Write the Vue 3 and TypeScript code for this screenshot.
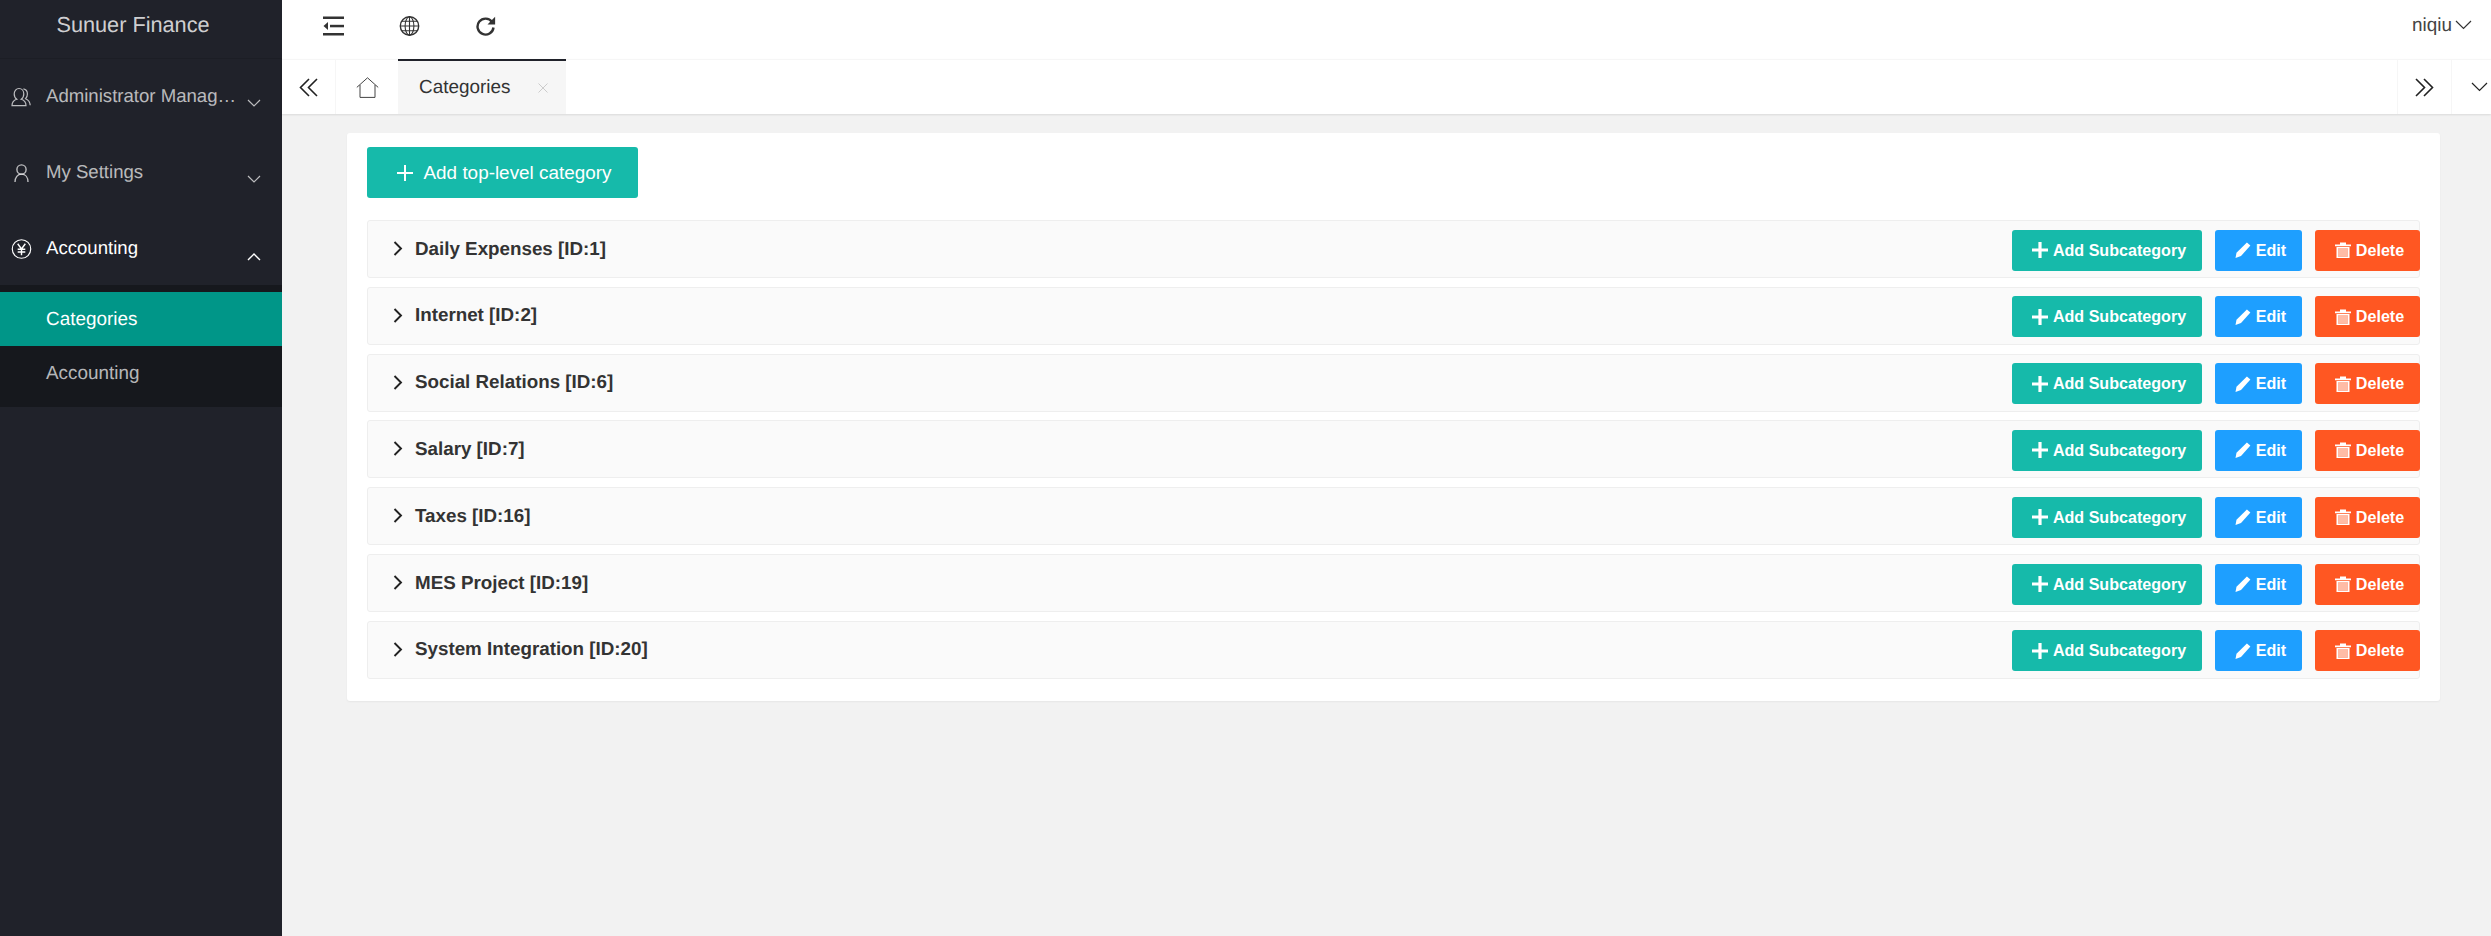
<script setup lang="ts">
type Category = { id: number; name: string };

const categories: Category[] = [
  { id: 1, name: "Daily Expenses" },
  { id: 2, name: "Internet" },
  { id: 6, name: "Social Relations" },
  { id: 7, name: "Salary" },
  { id: 16, name: "Taxes" },
  { id: 19, name: "MES Project" },
  { id: 20, name: "System Integration" },
];
</script>

<template>
  <div class="layout">
    <aside class="side">
      <div class="logo">Sunuer Finance</div>
      <nav class="menu">
        <div class="menu-item">
          <svg class="menu-icon" viewBox="0 0 21 19" fill="none" stroke="currentColor" stroke-width="1.2">
            <path d="M1 18.200c0-3.600 2.200-5.600 4.800-6.400C4 10.600 3.200 8.800 3.200 6.600 3.200 3.400 5.200 1 8 1s4.800 2.400 4.800 5.600c0 2.200-.8 4-2.600 5.200 2.600.8 4.800 2.800 4.800 6.400H1z" />
            <path d="M12.400 1.400c2.400.4 4 2.600 4 5.200 0 1.800-.6 3.400-1.800 4.600 2.400 1 4.400 3 4.600 6.600" />
          </svg>
          <span class="menu-text">Administrator Management</span>
          <svg class="menu-arrow" viewBox="0 0 14 8" fill="none" stroke="currentColor" stroke-width="1.2"><path d="M1 1l6 6 6-6" /></svg>
        </div>
        <div class="menu-item">
          <svg class="menu-icon" viewBox="0 0 21 19" fill="none" stroke="currentColor" stroke-width="1.4">
            <circle cx="10.500" cy="6" r="4.600" />
            <path d="M4 18.500c0-4.600 2.600-7.900 6.500-7.900s6.500 3.300 6.500 7.900" />
          </svg>
          <span class="menu-text">My Settings</span>
          <svg class="menu-arrow" viewBox="0 0 14 8" fill="none" stroke="currentColor" stroke-width="1.2"><path d="M1 1l6 6 6-6" /></svg>
        </div>
        <div class="menu-item open">
          <svg class="menu-icon" viewBox="0 0 21 21" fill="none" stroke="currentColor" stroke-width="1.2">
            <circle cx="10.500" cy="10.500" r="9.700" />
            <path stroke-width="1.500" d="M6.500 5l4 5.500 4-5.500M10.500 10.500V17M6.500 10.800h8M6.500 13.600h8" />
          </svg>
          <span class="menu-text">Accounting</span>
          <svg class="menu-arrow up" viewBox="0 0 14 8" fill="none" stroke="currentColor" stroke-width="1.400"><path d="M1 7l6-6 6 6" /></svg>
        </div>
        <div class="submenu">
          <div class="sub-item active">Categories</div>
          <div class="sub-item">Accounting</div>
        </div>
      </nav>
    </aside>

    <div class="body">
      <header class="toolbar">
        <div class="tool-left">
          <svg class="tool-icon" viewBox="0 0 21 19" fill="#333">
            <rect x="0" y="0" width="21" height="2.500" />
            <rect x="0" y="16.500" width="21" height="2.500" />
            <rect x="7" y="8.300" width="14" height="2.500" />
            <path d="M5 5.500v8L0.500 9.500z" />
          </svg>
          <svg class="tool-icon" viewBox="0 0 20 20" fill="none" stroke="#333" stroke-width="1.100">
            <circle cx="10" cy="10" r="9.200" stroke-width="1.400" />
            <ellipse cx="10" cy="10" rx="4.400" ry="9.200" />
            <path d="M10 .8v18.400M.8 10h18.400M2.200 5.200h15.600M2.200 14.800h15.600" />
          </svg>
          <svg class="tool-icon" viewBox="0 0 20 20" fill="none" stroke="#333" stroke-width="2.400">
            <path d="M16.600 6A8 8 0 1 0 18 11.500" />
            <path d="M19.600 .8v7.600h-7.600z" fill="#333" stroke="none" />
          </svg>
        </div>
        <div class="user">
          <span>niqiu</span>
          <svg class="user-arrow" viewBox="0 0 17 10" fill="none" stroke="#333" stroke-width="1.200"><path d="M1 1l7.500 7.500L16 1" /></svg>
        </div>
      </header>

      <div class="tabbar">
        <div class="tab-btn prev">
          <svg class="dbl" viewBox="0 0 19 19" fill="none" stroke="#222" stroke-width="1.600"><path d="M10 1L1.500 9.500 10 18M18 1L9.500 9.500 18 18" /></svg>
        </div>
        <div class="tab-home">
          <svg class="home" viewBox="0 0 23 21" fill="none" stroke="#444" stroke-width="1"><path d="M.8 10.400L11.500.8l10.700 9.600M4 8v12.400h15V8" /></svg>
        </div>
        <div class="tab">
          <span>Categories</span>
          <svg class="tab-close" viewBox="0 0 10 10" fill="none" stroke="#ccc" stroke-width="1"><path d="M.5.5l9 9M9.500.5l-9 9" /></svg>
        </div>
        <div class="tab-fill"></div>
        <div class="tab-btn next">
          <svg class="dbl" viewBox="0 0 19 19" fill="none" stroke="#222" stroke-width="1.600"><path d="M1 1l8.500 8.500L1 18M9 1l8.500 8.500L9 18" /></svg>
        </div>
        <div class="tab-btn more">
          <svg class="more-arrow" viewBox="0 0 17 10" fill="none" stroke="#222" stroke-width="1.200"><path d="M1 1l7.500 7.500L16 1" /></svg>
        </div>
      </div>

      <main class="content">
        <section class="card">
          <button class="add-top">
            <svg class="add-plus" viewBox="0 0 16 16" fill="none" stroke="#fff" stroke-width="2"><path d="M8 0v16M0 8h16" /></svg>
            Add top-level category
          </button>
          <ul class="rows">
            <li v-for="c in categories" :key="c.id" class="row">
              <svg class="chev" viewBox="0 0 10 15" fill="none" stroke="#222" stroke-width="1.900"><path d="M1.500 1l6.500 6.500L1.500 14" /></svg>
              <span class="row-name">{{ c.name }} [ID:{{ c.id }}]</span>
              <div class="row-actions">
                <button class="btn teal">
                  <svg class="btn-icon" viewBox="0 0 16 16" fill="none" stroke="#fff" stroke-width="3.200"><path d="M8 0v16M0 8h16" /></svg>
                  Add Subcategory
                </button>
                <button class="btn blue">
                  <svg class="btn-icon" viewBox="0 0 16 16" fill="#fff"><path d="M11.900.6l3.500 3L6 14 .5 16l1-5.200z" /></svg>
                  Edit
                </button>
                <button class="btn red">
                  <svg class="btn-icon" viewBox="0 0 16 16" fill="#fff">
                    <path d="M0 2.500h16v1.800H0zM5 .5h6v2H5z" />
                    <path fill-rule="evenodd" d="M1.500 5h13v11h-13zM3.200 6.200v8.500h9.600V6.200z" />
                    <path opacity=".6" d="M3.200 6.200h9.600v8.500H3.200z" />
                  </svg>
                  Delete
                </button>
              </div>
            </li>
          </ul>
        </section>
      </main>
    </div>
  </div>
</template>

<style>
html,
body {
  margin: 0;
  height: 100%;
}
</style>

<style scoped>
.layout {
  display: flex;
  height: 100vh;
  font-family: "Liberation Sans", Arial, sans-serif;
  font-size: 18.9px;
  color: #333;
  overflow: hidden;
  text-rendering: geometricPrecision;
}

.side {
  width: 282px;
  flex: none;
  background: #20222a;
}

.logo {
  height: 58px;
  line-height: 50px;
  padding-right: 16px;
  text-align: center;
  font-size: 21.7px;
  color: rgba(255, 255, 255, 0.8);
  box-shadow: 0 1px 0 rgba(0, 0, 0, 0.1);
}

.menu-item {
  height: 76px;
  display: flex;
  align-items: center;
  padding-left: 11px;
  color: rgba(255, 255, 255, 0.7);
}

.menu-item.open {
  color: #fff;
  height: 75px;
}

.menu-icon {
  width: 21px;
  height: 20px;
  flex: none;
  margin-right: 14px;
  margin-top: 2px;
}

.menu-text {
  width: 192px;
  font-size: 18.6px;
  white-space: nowrap;
  overflow: hidden;
  text-overflow: ellipsis;
}

.menu-arrow {
  width: 14px;
  height: 8px;
  flex: none;
  margin-left: 9px;
  margin-top: 14px;
}

.menu-arrow.up {
  margin-top: 18px;
}

.submenu {
  background: #16181d;
  padding: 7px 0;
}

.sub-item {
  height: 54px;
  line-height: 55px;
  padding-left: 46px;
  color: rgba(255, 255, 255, 0.7);
}

.sub-item.active {
  background: #009688;
  color: #fff;
}

.body {
  flex: 1;
  min-width: 0;
  background: #f2f2f2;
  display: flex;
  flex-direction: column;
}

.toolbar {
  height: 59px;
  flex: none;
  background: #fff;
  display: flex;
  align-items: center;
  justify-content: space-between;
  box-sizing: border-box;
  padding: 0 19px 8px 41px;
}

.tool-left {
  display: flex;
  align-items: center;
  gap: 55px;
}

.tool-icon {
  width: 21px;
  height: 20px;
  display: block;
}

.user {
  display: flex;
  align-items: center;
  gap: 3px;
  color: #444;
}

.user-arrow {
  width: 17px;
  height: 10px;
  margin-top: -2px;
}

.tabbar {
  height: 55px;
  flex: none;
  box-sizing: border-box;
  background: #fff;
  border-top: 1px solid #f6f6f6;
  display: flex;
  box-shadow: 0 1px 2px rgba(0, 0, 0, 0.1);
}

.tab-btn {
  display: flex;
  align-items: center;
  justify-content: center;
  box-sizing: border-box;
}

.prev {
  width: 54px;
  border-right: 1px solid #f6f6f6;
}

.next {
  width: 54px;
  border-left: 1px solid #f6f6f6;
}

.more {
  width: 40px;
  border-left: 1px solid #f6f6f6;
  justify-content: flex-start;
  padding-left: 19px;
}

.dbl {
  width: 19px;
  height: 19px;
}

.more-arrow {
  width: 17px;
  height: 10px;
}

.tab-home {
  width: 62px;
  display: flex;
  align-items: center;
  justify-content: center;
}

.home {
  width: 23px;
  height: 21px;
}

.tab {
  width: 168px;
  box-sizing: border-box;
  margin-top: -1px;
  border-top: 2px solid #20222a;
  background: #f6f6f6;
  display: flex;
  align-items: center;
  padding-left: 21px;
  color: #333;
}

.tab-close {
  width: 10px;
  height: 10px;
  margin-left: 28px;
}

.tab-fill {
  flex: 1;
}

.content {
  flex: 1;
  padding: 19px 51px 0 65px;
}

.card {
  background: #fff;
  border-radius: 3px;
  padding: 14px 20px 22px;
  box-shadow: 0 1px 2px rgba(0, 0, 0, 0.05);
}

.add-top {
  display: flex;
  align-items: center;
  justify-content: center;
  width: 271px;
  height: 51px;
  border: 0;
  border-radius: 3px;
  background: #16baaa;
  color: #fff;
  font: inherit;
  padding: 1px 0 0 3px;
}

.add-plus {
  width: 16px;
  height: 16px;
  margin-right: 11px;
}

.rows {
  list-style: none;
  margin: 22px 0 0;
  padding: 0;
  display: flex;
  flex-direction: column;
  gap: 8.83px;
}

.row {
  height: 58px;
  box-sizing: border-box;
  display: flex;
  align-items: center;
  background: #fafafa;
  border: 1px solid #eee;
  border-radius: 3px;
  padding-left: 25px;
}

.chev {
  width: 10px;
  height: 15px;
  flex: none;
  margin-right: 12px;
  margin-top: -1px;
}

.row-name {
  font-weight: bold;
  font-size: 18.8px;
  margin-top: -1px;
}

.row-actions {
  margin-left: auto;
  margin-right: -1px;
  display: flex;
  gap: 13px;
  margin-top: 2px;
}

.btn {
  height: 41px;
  border: 0;
  border-radius: 3px;
  color: #fff;
  font-family: inherit;
  font-size: 16.1px;
  font-weight: bold;
  display: flex;
  align-items: center;
  justify-content: center;
  padding: 0 0 0 4px;
}

.btn-icon {
  width: 16px;
  height: 16px;
  margin-right: 5px;
}

.teal {
  width: 190px;
  background: #16baaa;
}

.blue {
  width: 87px;
  background: #1e9fff;
}

.red {
  width: 105px;
  background: #ff5722;
}
</style>
